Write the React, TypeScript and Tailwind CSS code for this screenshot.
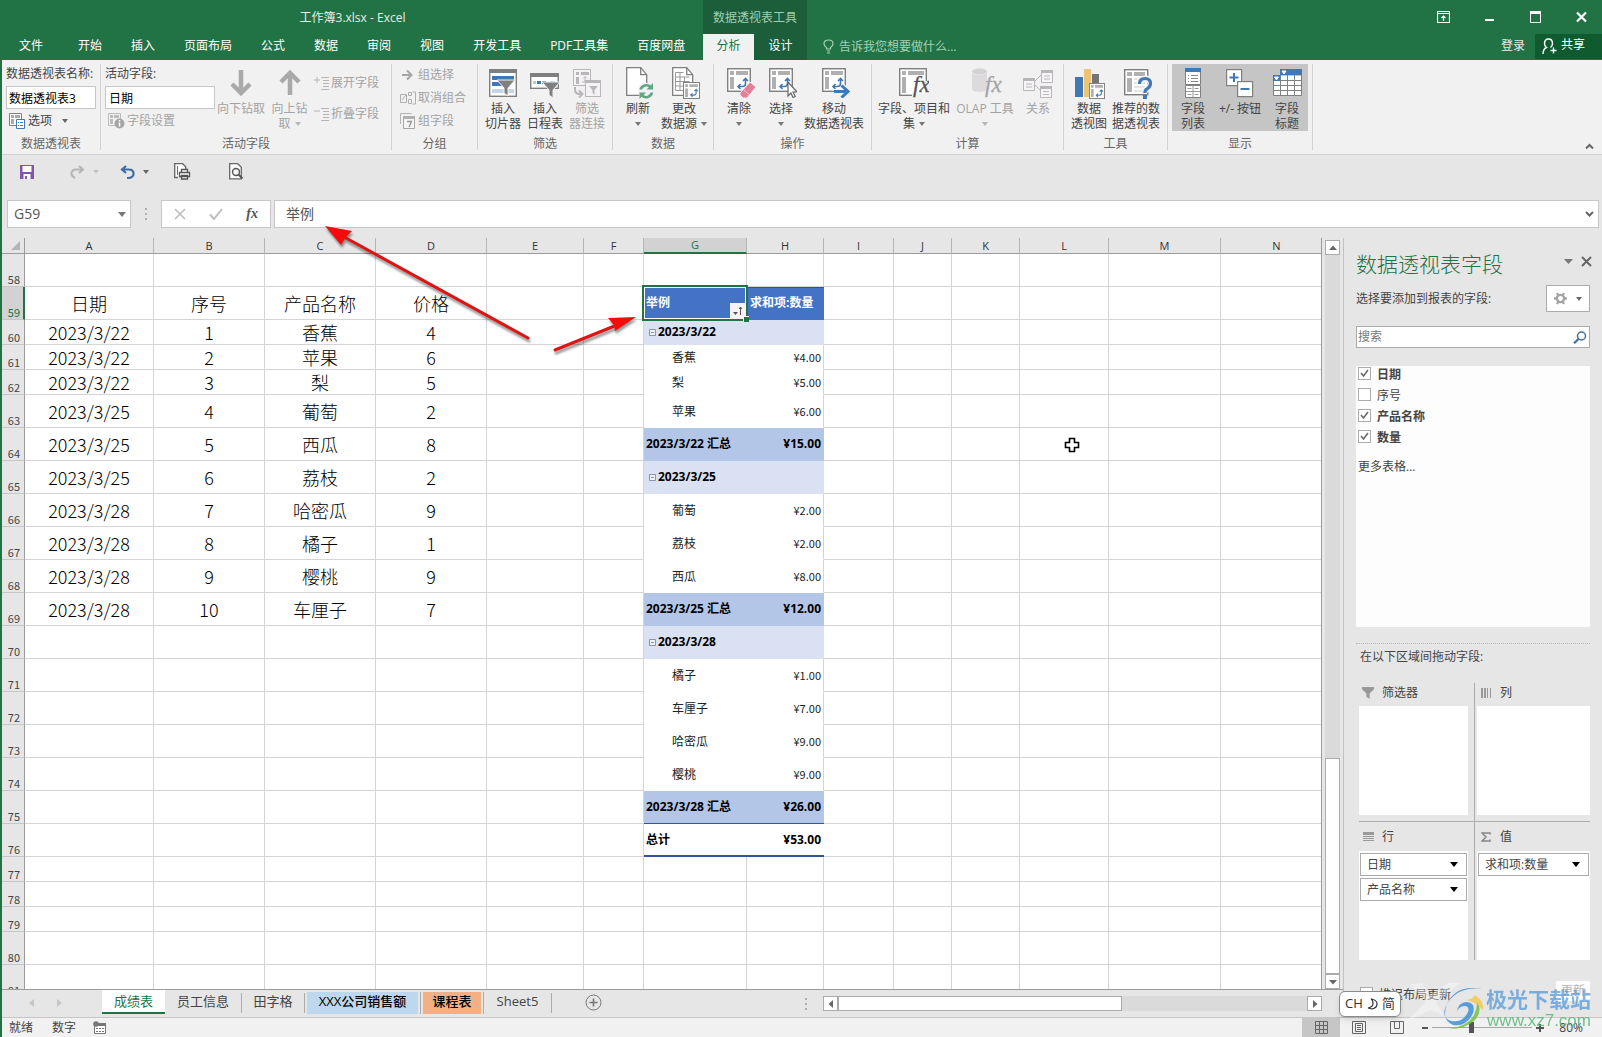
import React, { useState } from 'react';

const GRAY = '#7f7f7f';
const LIGHT = '#b9b6ba';
const BLUE = '#3f78b5';

/* ---------- small shared glyphs ---------- */

const Caret: React.FC<{ className?: string }> = ({ className = 'text-[#666666]' }) => (
  <svg width="6" height="4" viewBox="0 0 6 4" className={`shrink-0 ${className}`}>
    <path d="M0 0h6L3 4z" fill="currentColor" />
  </svg>
);

const PivotBase: React.FC<{ x?: number; y?: number; size?: number; color?: string; arrow?: string }> = ({
  x = 0,
  y = 0,
  size = 24,
  color = GRAY,
  arrow = BLUE,
}) => (
  <svg x={x} y={y} width={size} height={size} viewBox="0 0 24 24">
    <rect x="0.7" y="0.7" width="22.6" height="22.6" fill="#fff" stroke={color} strokeWidth="1.4" />
    <path d="M3 3h4v4H3zM9 3h12v4H9zM3 9h4v12H3z" fill="#b0b0b0" />
    <path d="M11 18.5h4.5c2 0 3-1 3-3V11M13.5 16L11 18.5l2.5 2.5M16 13l2.5-2.5L21 13" fill="none" stroke={arrow} strokeWidth="1.6" />
  </svg>
);

const Fx: React.FC<{ x: number; y: number; color: string }> = ({ x, y, color }) => (
  <text x={x} y={y} fill={color} fontSize="23" fontStyle="italic" fontFamily="Liberation Serif, serif" stroke={color} strokeWidth="0.3">
    fx
  </text>
);

const Funnel: React.FC<{ d: string }> = ({ d }) => <path d={d} fill={GRAY} stroke="#f1f1f1" strokeWidth="1" />;

const icons = {
  slicer: (
    <svg width="28" height="30" viewBox="0 0 28 30">
      <rect x="0.7" y="1.7" width="26.6" height="26.6" fill="#fff" stroke={GRAY} strokeWidth="1.4" />
      <path d="M0 1h28v4H0z" fill={GRAY} />
      <path d="M3 8h22v4H3zM3 14h12v4H3z" fill={BLUE} />
      <path d="M3 21h22v4H3z" fill="#c5d5e6" />
      <Funnel d="M8 12h18l-7 8v8l-4-3v-5z" />
    </svg>
  ),
  timeline: (
    <svg width="30" height="30" viewBox="0 0 30 30">
      <rect x="0.7" y="5.7" width="27.6" height="14.6" fill="#fff" stroke={GRAY} strokeWidth="1.4" />
      <path d="M0 5h29v4H0z" fill={GRAY} />
      <path d="M3 13h3v3H3zM20 13h5v3h-5z" fill="#b9c7d6" />
      <path d="M7 13h4v3H7zM12 13h4v3h-4z" fill={BLUE} />
      <Funnel d="M12 14h18l-7 8v8l-4-3v-5z" />
    </svg>
  ),
  filterConn: (
    <svg width="28" height="30" viewBox="0 0 28 30">
      <rect x="0.5" y="1.5" width="17" height="16" fill="#f5f2f6" stroke={LIGHT} />
      <path d="M3 4h3v3H3zM8 4h8v3H8zM3 9h3v7H3z" fill={LIGHT} />
      <path d="M9 14h3V9M10 10.500l2-2 2 2" fill="none" stroke={LIGHT} />
      <rect x="12.500" y="12.500" width="15" height="16" fill="#f5f2f6" stroke={LIGHT} />
      <path d="M12 12h16v3H12zM16 18h9l-3.500 4v5l-2-2v-3z" fill={LIGHT} />
      <path d="M2 19v3q0 4 5 4h2M6 22.500l3.500 3.500L6 29.500" fill="none" stroke={LIGHT} strokeWidth="2" />
    </svg>
  ),
  refresh: (
    <svg width="32" height="32" viewBox="-4 0 32 32">
      <path d="M.7.7h14l6 7v20.600H.7z" fill="#fff" stroke={GRAY} strokeWidth="1.3" />
      <path d="M14.700.7v7h6" fill="none" stroke={GRAY} strokeWidth="1.3" />
      <circle cx="20" cy="24" r="8" fill="#f1f1f1" />
      <path d="M14.500 22.500a6 6 0 0 1 10-2.500M26 25.500a6 6 0 0 1-10 3" fill="none" stroke="#63a583" strokeWidth="2.600" />
      <path d="M27 16v6.500h-6.500zM13.500 32v-6.500H20z" fill="#63a583" />
    </svg>
  ),
  changeSource: (
    <svg width="32" height="32" viewBox="-4 0 32 32">
      <path d="M.7.7h14l6 7v20.600H.7z" fill="#fff" stroke={GRAY} strokeWidth="1.300" />
      <path d="M14.700.7v7h6" fill="none" stroke={GRAY} strokeWidth="1.300" />
      <path d="M3.500 5.500h8M3.500 10h14M3.500 14.500h14M3.500 19h8M3.500 23.500h8M3.500 5.500v18M8 5.500v18M12.500 10v6" fill="none" stroke="#999" />
      <PivotBase x={11} y={15} size={17} />
    </svg>
  ),
  clear: (
    <svg width="33" height="31" viewBox="-4 0 33 31">
      <PivotBase y={1} />
      <path d="M13 26L23 15l6 5-9 11h-4l-3-3z" fill="#e57f97" stroke="#f1f1f1" />
      <path d="M16.500 22.500l5.500 5" stroke="#f7c9d3" />
    </svg>
  ),
  select: (
    <svg width="32" height="31" viewBox="-4 0 32 31">
      <PivotBase y={1} />
      <path d="M19 15v14l3-3 2 4.500 2.200-1L24 25h4z" fill="#fff" stroke="#666" strokeWidth="1.200" />
    </svg>
  ),
  move: (
    <svg width="32" height="31" viewBox="-4 0 32 31">
      <PivotBase y={1} />
      <path d="M12 24.500h14M20 18.500l6.500 6-6.500 6" fill="none" stroke="#f1f1f1" strokeWidth="5" />
      <path d="M12 24.500h14M19.500 18.500l6.500 6-6.500 6" fill="none" stroke={BLUE} strokeWidth="3" />
    </svg>
  ),
  fields: (
    <svg width="30" height="31" viewBox="0 0 30 31">
      <rect x="0.700" y="1.700" width="26.600" height="26.600" fill="#fff" stroke={GRAY} strokeWidth="1.400" />
      <path d="M3 4h4v4H3zM9 4h16v4H9zM3 10h4v16H3z" fill="#b0b0b0" />
      <path d="M13 28h15V14" fill="none" stroke="#f1f1f1" strokeWidth="3" />
      <Fx x={14} y={25} color="#555" />
    </svg>
  ),
  olap: (
    <svg width="34" height="31" viewBox="-3 0 34 31">
      <path d="M1 4v18c0 4 15 4 15 0V4z" fill="#dcdadd" />
      <ellipse cx="8.500" cy="4.500" rx="7.500" ry="3.200" fill="#d3d1d4" stroke="#e8e6e9" />
      <Fx x={14} y={25} color="#a5a3a6" />
    </svg>
  ),
  relation: (
    <svg width="30" height="30" viewBox="0 0 30 30">
      <path d="M11 14l8-8M11 16l8 8" stroke={LIGHT} />
      <path d="M.5 10.500h11v12H.5zM18.500 2.500h11v12h-11zM17.500 18.500h11v11h-11z" fill="#f7f5f8" stroke={LIGHT} />
      <path d="M0 10h12v3H0zM18 2h12v3H18zM17 18h12v3H17z" fill={LIGHT} />
      <path d="M3 16h6M3 19h6M21 8h6M21 11h6M20 23.500h6M20 26.500h6" stroke={LIGHT} />
    </svg>
  ),
  pivotChart: (
    <svg width="32" height="32" viewBox="-2 0 32 32">
      <path d="M0 10h8v20H0z" fill={BLUE} />
      <path d="M9 2h7v28H9z" fill="#eec373" />
      <path d="M17 7h7v10h-7z" fill="#76767a" />
      <PivotBase x={14} y={16} size={16} />
    </svg>
  ),
  recommended: (
    <svg width="33" height="32" viewBox="-4 0 33 32">
      <rect x="0.700" y="2.700" width="23" height="25" fill="#fff" stroke={GRAY} strokeWidth="1.400" />
      <path d="M3 5h5v4H3zM10 5h11v4H10zM3 11h5v14H3z" fill="#b0b0b0" />
      <path d="M10 12h11M10 16h11M10 20h11M10 24h8" stroke="#c9c9c9" />
      <path d="M15.500 17q0-5.500 5.500-5.500t5.500 5q0 3-3 5t-2.500 4.500" fill="none" stroke="#f1f1f1" strokeWidth="6" />
      <path d="M15.500 17q0-5.500 5.500-5.500t5.500 5q0 3-3 5t-2.500 4.500" fill="none" stroke={BLUE} strokeWidth="3.200" />
      <path d="M19 28h4v4h-4z" fill={BLUE} />
    </svg>
  ),
  fieldList: (
    <svg width="16" height="31" viewBox="0 0 16 31">
      <path d="M.5 1.500h15v16H.5zM.5 18.500h15v12H.5z" fill="#fff" stroke={GRAY} />
      <path d="M0 1h16v4H0z" fill={BLUE} />
      <path d="M3 8.500h1M6 8.500h7M3 11.500h1M6 11.500h7M3 14.500h1M6 14.500h7" stroke="#888" />
      <path d="M8 18v12M1 24.500h14M2.500 21.500h4M9.500 21.500h4M2.500 27.500h4M9.500 27.500h4" stroke="#999" />
    </svg>
  ),
  plusMinus: (
    <svg width="28" height="30" viewBox="0 0 28 30">
      <rect x="0.600" y="1.600" width="15" height="16" fill="#fff" stroke={GRAY} strokeWidth="1.200" />
      <path d="M3.500 9.500h9M8 5v9" stroke={BLUE} strokeWidth="2" />
      <rect x="11.600" y="13.600" width="15" height="15" fill="#fff" stroke={GRAY} strokeWidth="1.200" />
      <path d="M14.500 21h9" stroke={BLUE} strokeWidth="2" />
    </svg>
  ),
  fieldHeaders: (
    <svg width="29" height="29" viewBox="0 0 29 29">
      <path d="M.5 8h28v19.500H.5z" fill="#fff" />
      <path d="M7 1h22v6H7zM0 7h7v6H0z" fill={BLUE} />
      <path d="M.5 13v14.500h28V7M7.500 7v20M14.500 7v20M21.500 7v20M7 12.500h21M1 17.500h27M1 22.500h27" fill="none" stroke={GRAY} />
      <path d="M9 3h4l-2 3zM1.500 9h4l-2 3z" fill="#fff" stroke="#fff" />
    </svg>
  ),
  drillDown: (
    <svg width="22" height="30" viewBox="0 0 22 30">
      <path d="M11 2v24M2 16l9 9 9-9" fill="none" stroke="#a9a9a9" strokeWidth="4.500" />
    </svg>
  ),
  drillUp: (
    <svg width="22" height="30" viewBox="0 0 22 30">
      <path d="M11 27V4M2 14l9-9 9 9" fill="none" stroke="#a9a9a9" strokeWidth="4.500" />
    </svg>
  ),
};

/* ---------- ribbon ---------- */

interface BigButtonProps {
  icon: React.ReactNode;
  lines: string[];
  width: string;
  caret?: 'line' | 'inline';
  disabled?: boolean;
}

const BigButton: React.FC<BigButtonProps> = ({ icon, lines, width, caret, disabled }) => {
  const tone = disabled ? 'text-[#a3a3a3]' : 'text-[#444444]';
  const caretTone = disabled ? 'text-[#b5b5b5]' : 'text-[#777777]';
  return (
    <button disabled={disabled} className={`flex shrink-0 flex-col items-center ${width} ${tone}`}>
      <span className="flex h-[37px] items-center justify-center">{icon}</span>
      {lines.map((line, i) => (
        <span key={line} className="flex h-[15px] items-center gap-1 whitespace-nowrap leading-[15px]">
          {line}
          {caret === 'inline' && i === lines.length - 1 && <Caret className={caretTone} />}
        </span>
      ))}
      {caret === 'line' && (
        <span className="flex h-[15px] items-center">
          <Caret className={caretTone} />
        </span>
      )}
    </button>
  );
};

const Group: React.FC<{ label: string; width: string; children: React.ReactNode }> = ({ label, width, children }) => (
  <section className={`flex shrink-0 flex-col border-r border-[#d2d2d2] ${width}`}>
    <div className="flex h-[68px] px-1">{children}</div>
    <div className="mt-[6px] text-center leading-[14px] text-[#666666]">{label}</div>
  </section>
);

const smallIcons = {
  options: (
    <svg width="17" height="16" viewBox="0 0 17 16">
      <path d="M.5.500h12v12H.5z" fill="#fff" stroke={GRAY} />
      <path d="M2 2h3v3H2zM6 2h5v3H6zM2 6h3v5H2z" fill="#aaa" />
      <path d="M7.500 6.500h8v9h-8z" fill="#fff" stroke={BLUE} />
      <path d="M9 9.500h1M11 9.500h3M9 12.500h1M11 12.500h3" stroke={BLUE} />
    </svg>
  ),
  settings: (
    <svg width="17" height="16" viewBox="0 0 17 16">
      <path d="M.5.500h12v12H.5z" fill="#f3f3f3" stroke="#bbb" />
      <path d="M2 2h3v3H2zM6 2h5v3H6zM2 6h3v5H2z" fill="#bbb" />
      <circle cx="11.500" cy="10.500" r="5" fill="#a5a5a5" />
      <path d="M11.500 7v1.500M11.500 9.500v4" stroke="#fff" strokeWidth="1.500" />
    </svg>
  ),
  expand: (
    <svg width="15" height="15" viewBox="0 0 15 15">
      <path d="M0 4h6M3 1v6M7 1.500h8M9 4.500h6M9 7.500h6M9 10.500h6M7 13.500h8" stroke="#b5b5b5" />
    </svg>
  ),
  collapse: (
    <svg width="15" height="15" viewBox="0 0 15 15">
      <path d="M0 4h6M7 1.500h8M9 4.500h6M9 7.500h6M9 10.500h6M7 13.500h8" stroke="#b5b5b5" />
    </svg>
  ),
  groupSel: (
    <svg width="16" height="14" viewBox="0 0 16 14">
      <path d="M2 7h9M7 2.500L11.500 7 7 11.500" fill="none" stroke="#a5a5a5" strokeWidth="2" />
    </svg>
  ),
  ungroup: (
    <svg width="16" height="14" viewBox="0 0 16 14">
      <path d="M.5 3.500h6v8h-6zM8.500 1.500h3v3h-3zM8.500 8.500h3v4h-3zM12.500 1h3v12h-3M2 9l4-5" fill="none" stroke="#b0b0b0" />
    </svg>
  ),
  groupField: (
    <svg width="16" height="17" viewBox="0 0 16 17">
      <path d="M.5 11V.500h11" fill="none" stroke="#b5b5b5" />
      <path d="M3.500 3.500h11v12h-11z" fill="#f5f5f5" stroke="#a5a5a5" />
      <path d="M3 3h12v3H3z" fill="#b0b0b0" />
      <path d="M7 8.500h4.500L9 14" fill="none" stroke="#999" strokeWidth="1.400" />
    </svg>
  ),
};

const SmallButton: React.FC<{ icon: React.ReactNode; label: string; disabled?: boolean; caret?: boolean }> = ({
  icon,
  label,
  disabled,
  caret,
}) => (
  <button
    disabled={disabled}
    className={`flex h-5 items-center gap-[2px] whitespace-nowrap ${disabled ? 'text-[#a3a3a3]' : 'text-[#444444]'}`}
  >
    {icon}
    {label}
    {caret && <Caret className="ml-[8px] text-[#666666]" />}
  </button>
);

const Ribbon = () => (
  <div className="flex h-[95px] border-b border-[#cfcfcf] bg-[#f1f1f1] pt-1 pb-1">
    <Group label="数据透视表" width="w-[99px]">
      <div className="flex w-full flex-col items-start">
        <label htmlFor="pivot-name" className="h-5 leading-5 whitespace-nowrap text-[#444444]">
          数据透视表名称:
        </label>
        <input
          id="pivot-name"
          defaultValue="数据透视表3"
          className="mt-[2px] h-[23px] w-full border border-[#c6c6c6] bg-white px-[2px] text-black"
        />
        <span className="mt-[2px] pl-[3px]">
          <SmallButton icon={smallIcons.options} label="选项" caret />
        </span>
      </div>
    </Group>
    <Group label="活动字段" width="w-[291px]">
      <div className="flex w-[110px] flex-col items-start">
        <label htmlFor="active-field" className="h-5 leading-5 text-[#444444]">
          活动字段:
        </label>
        <input
          id="active-field"
          defaultValue="日期"
          className="mt-[2px] h-[23px] w-full border border-[#c6c6c6] bg-white px-[3px] text-black"
        />
        <span className="mt-[2px] pl-[3px]">
          <SmallButton icon={smallIcons.settings} label="字段设置" disabled />
        </span>
      </div>
      <BigButton icon={icons.drillDown} lines={['向下钻取']} width="w-[52px]" disabled />
      <BigButton icon={icons.drillUp} lines={['向上钻', '取']} width="w-[45px]" caret="inline" disabled />
      <div className="flex flex-col gap-[11px] pt-[9px] pl-[2px]">
        <SmallButton icon={smallIcons.expand} label="展开字段" disabled />
        <SmallButton icon={smallIcons.collapse} label="折叠字段" disabled />
      </div>
    </Group>
    <Group label="分组" width="w-[86px]">
      <div className="flex flex-col gap-[3px] pt-px pl-1">
        <SmallButton icon={smallIcons.groupSel} label="组选择" disabled />
        <SmallButton icon={smallIcons.ungroup} label="取消组合" disabled />
        <SmallButton icon={smallIcons.groupField} label="组字段" disabled />
      </div>
    </Group>
    <Group label="筛选" width="w-[135px]">
      <BigButton icon={icons.slicer} lines={['插入', '切片器']} width="w-[42px]" />
      <BigButton icon={icons.timeline} lines={['插入', '日程表']} width="w-[42px]" />
      <BigButton icon={icons.filterConn} lines={['筛选', '器连接']} width="w-[42px]" disabled />
    </Group>
    <Group label="数据" width="w-[101px]">
      <BigButton icon={icons.refresh} lines={['刷新']} width="w-[42px]" caret="line" />
      <BigButton icon={icons.changeSource} lines={['更改', '数据源']} width="w-[50px]" caret="inline" />
    </Group>
    <Group label="操作" width="w-[158px]">
      <BigButton icon={icons.clear} lines={['清除']} width="w-[42px]" caret="line" />
      <BigButton icon={icons.select} lines={['选择']} width="w-[42px]" caret="line" />
      <BigButton icon={icons.move} lines={['移动', '数据透视表']} width="w-[64px]" />
    </Group>
    <Group label="计算" width="w-[192px]">
      <BigButton icon={icons.fields} lines={['字段、项目和', '集']} width="w-[76px]" caret="inline" />
      <BigButton icon={icons.olap} lines={['OLAP 工具']} width="w-[66px]" caret="line" disabled />
      <BigButton icon={icons.relation} lines={['关系']} width="w-[40px]" disabled />
    </Group>
    <Group label="工具" width="w-[104px]">
      <BigButton icon={icons.pivotChart} lines={['数据', '透视图']} width="w-[42px]" />
      <BigButton icon={icons.recommended} lines={['推荐的数', '据透视表']} width="w-[52px]" />
    </Group>
    <Group label="显示" width="w-[145px]">
      <div className="flex bg-[#c5c5c5]">
        <BigButton icon={icons.fieldList} lines={['字段', '列表']} width="w-[42px]" />
        <BigButton icon={icons.plusMinus} lines={['+/- 按钮']} width="w-[52px]" />
        <BigButton icon={icons.fieldHeaders} lines={['字段', '标题']} width="w-[42px]" />
      </div>
    </Group>
    <button aria-label="折叠功能区" className="mr-2 ml-auto self-end">
      <svg width="9" height="7" viewBox="0 0 9 7">
        <path d="M1 5.500L4.500 2 8 5.500" fill="none" stroke="#666" strokeWidth="2" />
      </svg>
    </button>
  </div>
);

/* ---------- title bar ---------- */

const menuTabs = ['开始', '插入', '页面布局', '公式', '数据', '审阅', '视图', '开发工具', 'PDF工具集', '百度网盘'];

const TitleBar = () => (
  <header className="bg-[#217346] text-white">
    <div className="flex h-[34px]">
      <div className="w-[701px] shrink-0 text-center leading-[36px] text-[#e3f1e8]">工作簿3.xlsx - Excel</div>
      <div className="w-[104px] shrink-0 bg-[#1b5e39] text-center leading-[36px] text-[#9fcfb3]">数据透视表工具</div>
      <div className="flex flex-1 items-center justify-end gap-[35px] pr-[15px] pb-px">
        <button aria-label="功能区显示选项">
          <svg width="13" height="12" viewBox="0 0 13 12">
            <path d="M.5.500h12v11H.5zM.5 2.500h12M6.500 10V5M4.500 7l2-2 2 2" fill="none" stroke="#fff" strokeWidth="1.200" />
          </svg>
        </button>
        <button aria-label="最小化">
          <svg width="10" height="12" viewBox="0 0 10 12">
            <path d="M0 8h9v2H0z" fill="#fff" />
          </svg>
        </button>
        <button aria-label="最大化">
          <svg width="11" height="12" viewBox="0 0 11 12">
            <path d="M.5.500h10v11H.5z" fill="none" stroke="#fff" />
            <path d="M0 0h11v3H0z" fill="#fff" />
          </svg>
        </button>
        <button aria-label="关闭">
          <svg width="11" height="12" viewBox="0 0 11 12">
            <path d="M1 1.500l9 9M10 1.500l-9 9" stroke="#fff" strokeWidth="2.200" />
          </svg>
        </button>
      </div>
    </div>
    <div className="flex h-[26px] leading-[24px]">
      <nav className="flex w-[701px] shrink-0 gap-[29px] pl-[17px] whitespace-nowrap">
        <button className="mr-[6px] h-[24px]">文件</button>
        {menuTabs.map((t) => (
          <button key={t} className="h-[24px]">
            {t}
          </button>
        ))}
      </nav>
      <nav className="flex w-[104px] shrink-0 bg-[#1b5e39]">
        <button className="w-[51px] bg-[#f1f1f1] pb-[2px] text-[#217346]">分析</button>
        <button className="flex-1 pb-[2px]">设计</button>
      </nav>
      <div className="flex flex-1 items-start pl-4 text-[#a3d1b6]">
        <svg width="12" height="15" viewBox="0 0 12 15" className="mt-[5px] shrink-0">
          <path d="M3.500 10V8.500Q1 7 1 4.800 1 1 5.500 1T10 4.800Q10 7 7.500 8.500V10zM4 12h3M4 14h3" fill="none" stroke="currentColor" strokeWidth="1.200" />
        </svg>
        <input
          aria-label="告诉我您想要做什么"
          placeholder="告诉我您想要做什么..."
          className="ml-1 h-[25px] w-[140px] bg-transparent outline-none placeholder:text-[#a3d1b6]"
        />
        <button className="mr-[10px] ml-auto h-[24px] text-[#e3f1e8]">登录</button>
        <button className="flex h-[25px] w-[67px] items-start gap-1 bg-[#0f5a2e] pl-[7px] leading-[22px] text-white">
          <svg width="15" height="17" viewBox="0 0 15 17" className="mt-1">
            <path d="M1 16q0-5 3.500-6.500Q2.500 8 2.500 5.500 2.500 1 6.500 1t4 4.500Q10.500 8 8.500 9.500M11.500 9.500v6M8.500 12.500h6" fill="none" stroke="#fff" strokeWidth="1.400" />
          </svg>
          共享
        </button>
      </div>
    </div>
  </header>
);

/* ---------- quick access and formula bar ---------- */

const QuickAccess = () => (
  <div className="flex h-[33px] items-center pl-[18px]">
    <button aria-label="保存">
      <svg width="14" height="14" viewBox="0 0 14 14">
        <path d="M0 0h14v14H0z" fill="#8057a8" />
        <path d="M2.500 1h9v6h-9zM3.500 9h7v5h-7z" fill="#fff" />
        <path d="M5 11h2v3H5z" fill="#8057a8" />
      </svg>
    </button>
    <button aria-label="恢复" className="ml-9 flex items-center gap-2">
      <svg width="15" height="14" viewBox="0 0 15 14">
        <path d="M5 13Q1 11 1.500 8 2 4.500 6 4.500h6.500M9 1l4 3.500L9 8" fill="none" stroke="#b5b5b5" strokeWidth="2" />
      </svg>
      <Caret className="text-[#c2c2c2]" />
    </button>
    <button aria-label="撤消" className="ml-[21px] flex items-center gap-2">
      <svg width="15" height="14" viewBox="0 0 15 14">
        <path d="M7 13h2Q14 12 13.500 8 13 4.500 9 4.500H2M6 1L2 4.500 6 8" fill="none" stroke="#3d6da8" strokeWidth="2.200" />
      </svg>
      <Caret />
    </button>
    <button aria-label="打印" className="ml-[25px]">
      <svg width="17" height="17" viewBox="0 0 17 17">
        <path d="M4 14.500H.7V.7h8l3 3V6" fill="#fff" stroke="#666" strokeWidth="1.300" />
        <path d="M3.500 3v9" stroke={BLUE} />
        <path d="M5.500 9.500h10v4h-10zM7.500 6.500h6v3h-6zM7.500 12.500h6v3.500h-6z" fill="#fff" stroke="#555" strokeWidth="1.300" />
      </svg>
    </button>
    <button aria-label="打印预览" className="ml-[38px]">
      <svg width="15" height="17" viewBox="0 0 15 17">
        <path d="M.7.700h8l3.600 3.600v11.500H.7z" fill="#fff" stroke="#666" strokeWidth="1.300" />
        <circle cx="7" cy="9" r="3.500" fill="#f5f5f5" stroke="#555" strokeWidth="1.400" />
        <path d="M9.500 11.500l4 4" stroke="#555" strokeWidth="2" />
      </svg>
    </button>
  </div>
);

const Dots = () => (
  <svg width="2" height="12" viewBox="0 0 2 12" className="shrink-0">
    <path d="M0 0h2v2H0zM0 5h2v2H0zM0 10h2v2H0z" fill="#b0b0b0" />
  </svg>
);

const FormulaBar = () => (
  <div className="mt-[12px] mb-[10px] flex h-[28px] items-stretch pr-[3px] pl-[5px] text-sm text-[#555555]">
    <div className="flex w-[124px] shrink-0 items-center border border-[#c6c6c6] bg-white pr-1">
      <input aria-label="名称框" defaultValue="G59" className="w-full min-w-0 flex-1 bg-transparent pl-[6px] outline-none" />
      <svg width="8" height="5" viewBox="0 0 8 5">
        <path d="M0 0h8L4 5z" fill="#777" />
      </svg>
    </div>
    <div className="flex w-[30px] shrink-0 items-center justify-center">
      <Dots />
    </div>
    <div className="flex w-[110px] shrink-0 items-center justify-between border border-[#c6c6c6] bg-white px-3">
      <button aria-label="取消">
        <svg width="12" height="12" viewBox="0 0 12 12">
          <path d="M1 1l10 10M11 1L1 11" stroke="#bdbdbd" strokeWidth="1.600" />
        </svg>
      </button>
      <button aria-label="输入">
        <svg width="14" height="12" viewBox="0 0 14 12">
          <path d="M1 6.500L5 11 13 1" fill="none" stroke="#bdbdbd" strokeWidth="2" />
        </svg>
      </button>
      <button aria-label="插入函数" className="font-['Liberation_Serif',serif] text-sm font-bold italic">
        fx
      </button>
    </div>
    <div className="ml-[3px] flex flex-1 items-center border border-[#c6c6c6] bg-white pr-1">
      <input aria-label="编辑栏" defaultValue="举例" className="flex-1 bg-transparent pl-[11px] outline-none" />
      <svg width="9" height="6" viewBox="0 0 9 6">
        <path d="M1 1l3.500 3.500L8 1" fill="none" stroke="#666" strokeWidth="2" />
      </svg>
    </div>
  </div>
);

/* ---------- worksheet ---------- */

const columns = [
  { id: 'A', w: 'w-[129px]' },
  { id: 'B', w: 'w-[111px]' },
  { id: 'C', w: 'w-[111px]' },
  { id: 'D', w: 'w-[111px]' },
  { id: 'E', w: 'w-[97px]' },
  { id: 'F', w: 'w-[60px]' },
  { id: 'G', w: 'w-[103px]' },
  { id: 'H', w: 'w-[77px]' },
  { id: 'I', w: 'w-[70px]' },
  { id: 'J', w: 'w-[58px]' },
  { id: 'K', w: 'w-[68px]' },
  { id: 'L', w: 'w-[89px]' },
  { id: 'M', w: 'w-[112px]' },
  { id: 'N', w: '' },
];

type PivotKind = 'head' | 'group' | 'item' | 'subtotal' | 'lastSubtotal' | 'total';

interface SheetRow {
  n: number;
  data?: string[];
  pivot?: [PivotKind, string, string];
}

const rows: SheetRow[] = [
  { n: 58 },
  { n: 59, data: ['日期', '序号', '产品名称', '价格'], pivot: ['head', '举例', '求和项:数量'] },
  { n: 60, data: ['2023/3/22', '1', '香蕉', '4'], pivot: ['group', '2023/3/22', ''] },
  { n: 61, data: ['2023/3/22', '2', '苹果', '6'], pivot: ['item', '香蕉', '¥4.00'] },
  { n: 62, data: ['2023/3/22', '3', '梨', '5'], pivot: ['item', '梨', '¥5.00'] },
  { n: 63, data: ['2023/3/25', '4', '葡萄', '2'], pivot: ['item', '苹果', '¥6.00'] },
  { n: 64, data: ['2023/3/25', '5', '西瓜', '8'], pivot: ['subtotal', '2023/3/22 汇总', '¥15.00'] },
  { n: 65, data: ['2023/3/25', '6', '荔枝', '2'], pivot: ['group', '2023/3/25', ''] },
  { n: 66, data: ['2023/3/28', '7', '哈密瓜', '9'], pivot: ['item', '葡萄', '¥2.00'] },
  { n: 67, data: ['2023/3/28', '8', '橘子', '1'], pivot: ['item', '荔枝', '¥2.00'] },
  { n: 68, data: ['2023/3/28', '9', '樱桃', '9'], pivot: ['item', '西瓜', '¥8.00'] },
  { n: 69, data: ['2023/3/28', '10', '车厘子', '7'], pivot: ['subtotal', '2023/3/25 汇总', '¥12.00'] },
  { n: 70, pivot: ['group', '2023/3/28', ''] },
  { n: 71, pivot: ['item', '橘子', '¥1.00'] },
  { n: 72, pivot: ['item', '车厘子', '¥7.00'] },
  { n: 73, pivot: ['item', '哈密瓜', '¥9.00'] },
  { n: 74, pivot: ['item', '樱桃', '¥9.00'] },
  { n: 75, pivot: ['lastSubtotal', '2023/3/28 汇总', '¥26.00'] },
  { n: 76, pivot: ['total', '总计', '¥53.00'] },
  { n: 77 },
  { n: 78 },
  { n: 79 },
  { n: 80 },
  { n: 81 },
];

const shortRows = [60, 61, 62, 77, 78, 79];

const pivotStyle: Record<PivotKind, string> = {
  head: "bg-[#4472c4] text-white font-bold border-b border-b-[#4472c4] shadow-[inset_0_1px_0_#2f5597] font-['Open_Sans','Noto_Sans_CJK_SC',sans-serif]",
  group: "bg-[#d9e1f2] font-bold border-b border-b-[#d9e1f2] font-['Open_Sans','Noto_Sans_CJK_SC',sans-serif]",
  item: "bg-white border-b border-b-white font-['Noto_Sans_CJK_SC',sans-serif] text-[#222222]",
  subtotal: "bg-[#b4c6e7] font-bold border-b border-b-[#b4c6e7] font-['Open_Sans','Noto_Sans_CJK_SC',sans-serif]",
  lastSubtotal: "bg-[#b4c6e7] font-bold border-b border-b-[#305496] font-['Open_Sans','Noto_Sans_CJK_SC',sans-serif]",
  total: "bg-white font-bold border-b-2 border-b-[#305496] font-['Open_Sans','Noto_Sans_CJK_SC',sans-serif]",
};

const PivotCells: React.FC<{ row: SheetRow }> = ({ row }) => {
  const [kind, name, value] = row.pivot!;
  const base = `p-0 leading-4 whitespace-nowrap ${pivotStyle[kind]}`;
  return (
    <>
      <td className={`relative text-xs ${base}`}>
        <div className={`flex items-center ${kind === 'item' ? 'pl-[28px]' : kind === 'group' ? 'pl-[5px]' : 'pl-[2px]'}`}>
          {kind === 'group' && (
            <svg width="7" height="7" viewBox="0 0 7 7" className="mr-[2px]">
              <path d="M.5.500h6v6h-6zM2 3.500h3" fill="#eef2fa" stroke="#8c93a3" />
            </svg>
          )}
          {name}
        </div>
        {kind === 'head' && (
          <div className="absolute -top-[2px] -right-px bottom-[-2px] -left-[2px] z-10 border-2 border-[#217346] ring-1 ring-white ring-inset">
            <button aria-label="筛选 举例" className="absolute right-0 bottom-0 flex h-4 w-4 items-center justify-center bg-[#f4f4f4]">
              <svg width="12" height="10" viewBox="0 0 12 10">
                <path d="M1 6h5L3.500 9z" fill="#555" />
                <path d="M8.500 9V1M7 3l1.500-2L10 3" fill="none" stroke="#555" />
              </svg>
            </button>
            <span className="absolute -right-[3px] -bottom-[3px] h-[6px] w-[6px] border-t border-l border-white bg-[#217346]" />
          </div>
        )}
      </td>
      <td
        className={`${base} ${
          kind === 'head'
            ? 'pl-[3px] text-left text-xs'
            : kind === 'item'
              ? 'border-r border-r-[#d4d4d4] pr-[2px] text-right text-[11px]'
              : 'pr-[3px] text-right text-xs'
        }`}
      >
        {value}
      </td>
    </>
  );
};

const Sheet = () => (
  <div className="min-h-0 flex-1 overflow-hidden border-r border-[#9b9b9b]">
    <table className="w-[calc(100%+12px)] table-fixed border-separate border-spacing-0 font-['Noto_Sans_CJK_SC',sans-serif] text-black">
      <colgroup>
        <col className="w-[23px]" />
        {columns.map((c) => (
          <col key={c.id} className={c.w} />
        ))}
      </colgroup>
      <thead className="font-['Open_Sans',sans-serif]">
        <tr className="h-[16px] text-[11px] leading-[14px]">
          <th aria-label="全选" className="border-r border-b border-[#9b9b9b] p-0">
            <svg width="9" height="9" viewBox="0 0 9 9" className="ml-auto mr-1">
              <path d="M9 0v9H0z" fill="#b5b5b5" />
            </svg>
          </th>
          {columns.map((c) => (
            <th
              key={c.id}
              scope="col"
              className={
                c.id === 'G'
                  ? 'border-r border-b-2 border-r-[#b5b5b5] border-b-[#217346] bg-[#d2d2d2] p-0 font-normal text-[#217346]'
                  : 'border-r border-b border-r-[#b5b5b5] border-b-[#9b9b9b] p-0 font-normal text-[#333333]'
              }
            >
              {c.id}
            </th>
          ))}
        </tr>
      </thead>
      <tbody>
        {rows.map((row) => (
          <tr key={row.n} className={shortRows.includes(row.n) ? 'h-[25px]' : 'h-[33px]'}>
            <th
              scope="row"
              className={
                row.n === 59
                  ? 'border-r-2 border-b border-r-[#217346] border-b-[#c6c6c6] bg-[#d2d2d2] p-0 pr-[3px] text-right align-bottom text-[11px] leading-[14px] font-normal text-[#217346]'
                  : 'border-r border-b border-r-[#9b9b9b] border-b-[#c6c6c6] bg-[#e6e6e6] p-0 pr-1 text-right align-bottom text-[11px] leading-[14px] font-normal text-[#444444]'
              }
            >
              {row.n}
            </th>
            {columns.map((c, i) => {
              if (row.pivot && c.id === 'G') return <PivotCells key={c.id} row={row} />;
              if (row.pivot && c.id === 'H') return null;
              return (
                <td
                  key={c.id}
                  className="border-r border-b border-[#d4d4d4] bg-white p-0 text-center text-[18px] leading-[22px] font-light whitespace-nowrap"
                >
                  {row.data && row.data[i]}
                </td>
              );
            })}
          </tr>
        ))}
      </tbody>
    </table>
  </div>
);

const ScrollButton: React.FC<{ label: string; d: string; className: string }> = ({ label, d, className }) => (
  <button aria-label={label} className={`flex shrink-0 items-center justify-center border border-[#ababab] bg-white ${className}`}>
    <svg width="8" height="8" viewBox="0 0 8 8">
      <path d={d} fill="#666" />
    </svg>
  </button>
);

const SheetTabs = () => {
  const plain = 'mt-[3px] h-[20px] border-r border-[#ababab] pb-1 leading-4';
  const tinted = 'mt-[2px] flex h-[22px] border-r border-[#ababab] px-[2px]';
  return (
    <div className="flex h-[28px] shrink-0 items-start border-t border-[#9b9b9b] pr-[21px] text-[13px] leading-[22px] text-[#444444]">
      <div className="flex h-[25px] w-[100px] shrink-0 items-center gap-[23px] pl-[27px]">
        <svg width="5" height="8" viewBox="0 0 5 8">
          <path d="M5 0v8L0 4z" fill="#c6c6c6" />
        </svg>
        <svg width="5" height="8" viewBox="0 0 5 8">
          <path d="M0 0v8l5-4z" fill="#c6c6c6" />
        </svg>
      </div>
      <button className="h-[24px] w-[63px] border-b-2 border-[#217346] bg-white leading-[20px] text-[#217346]">成绩表</button>
      <button className={`w-[77px] ${plain}`}>员工信息</button>
      <button className={`w-[63px] ${plain}`}>田字格</button>
      <div className={`w-[116px] ${tinted}`}>
        <button className="w-full bg-[#bdd7ee] pb-1 leading-[18px] font-medium text-black">XXX公司销售额</button>
      </div>
      <div className={`w-[63px] ${tinted}`}>
        <button className="w-full bg-[#f4b084] pb-1 leading-[18px] font-medium text-black">课程表</button>
      </div>
      <button className={`w-[68px] ${plain}`}>Sheet5</button>
      <button aria-label="新工作表" className="mt-1 ml-[33px]">
        <svg width="17" height="17" viewBox="0 0 17 17">
          <circle cx="8.500" cy="8.500" r="7.500" fill="none" stroke="#777" />
          <path d="M8.500 4.500v8M4.500 8.500h8" stroke="#777" strokeWidth="1.600" />
        </svg>
      </button>
      <div className="ml-auto flex h-[27px] items-center">
        <Dots />
        <ScrollButton label="向左滚动" d="M6 0v8L1.500 4z" className="ml-4 h-[15px] w-[15px]" />
        <div className="h-[15px] w-[469px] bg-[#dadada]">
          <div className="h-full w-[284px] border border-[#ababab] bg-white" />
        </div>
        <ScrollButton label="向右滚动" d="M2 0v8l4.500-4z" className="h-[15px] w-[15px]" />
      </div>
    </div>
  );
};

/* ---------- field pane ---------- */

const CheckRow: React.FC<{ label: string; initial?: boolean }> = ({ label, initial = false }) => {
  const [on, setOn] = useState(initial);
  return (
    <label className={`relative flex h-[21px] items-start gap-[6px] leading-[17px] ${on ? 'font-bold' : ''}`}>
      <input
        type="checkbox"
        checked={on}
        onChange={(e) => setOn(e.target.checked)}
        className="mt-px h-[13px] w-[13px] shrink-0 appearance-none border border-[#ababab] bg-white"
      />
      {on && (
        <svg width="9" height="8" viewBox="0 0 9 8" className="pointer-events-none absolute top-[3px] left-[2px]">
          <path d="M1 4l2.500 3L8 1" fill="none" stroke="#666" strokeWidth="1.500" />
        </svg>
      )}
      {label}
    </label>
  );
};

const AreaSelect: React.FC<{ value: string }> = ({ value }) => (
  <div className="relative mx-px flex items-center">
    <select
      aria-label={value}
      defaultValue={value}
      className="h-[23px] w-full appearance-none border border-[#ababab] bg-white pl-[6px] text-[#444444]"
    >
      <option>{value}</option>
    </select>
    <svg width="8" height="5" viewBox="0 0 8 5" className="pointer-events-none absolute right-[9px]">
      <path d="M0 0h8L4 5z" fill="#000" />
    </svg>
  </div>
);

interface AreaProps {
  icon: React.ReactNode;
  title: string;
  head: string;
  pad: string;
  fields?: string[];
}

const Area: React.FC<AreaProps> = ({ icon, title, head, pad, fields = [] }) => (
  <div className={pad}>
    <div className={`flex items-center gap-[8px] pl-[3px] ${head}`}>
      <span className="flex w-3 justify-center">{icon}</span>
      {title}
    </div>
    <div className="flex h-[109px] flex-col gap-[2px] bg-white pt-[2px]">
      {fields.map((f) => (
        <AreaSelect key={f} value={f} />
      ))}
    </div>
  </div>
);

const FieldPane = () => (
  <aside className="flex w-[259px] shrink-0 flex-col border-l border-[#c0c0c0] pr-3 pl-3 text-[#444444]">
    <div className="mt-[10px] flex h-8 items-center">
      <h2 className="text-[21px] leading-8 font-light text-[#217346]">数据透视表字段</h2>
      <div className="mr-[-2px] mb-[6px] ml-auto flex items-center gap-2">
        <svg width="9" height="5" viewBox="0 0 9 5">
          <path d="M0 0h9L4.500 5z" fill="#777" />
        </svg>
        <button aria-label="关闭窗格">
          <svg width="11" height="11" viewBox="0 0 11 11">
            <path d="M1 1l9 9M10 1l-9 9" stroke="#666" strokeWidth="2" />
          </svg>
        </button>
      </div>
    </div>
    <div className="mt-[5px] flex h-[27px] items-center justify-between">
      <span>选择要添加到报表的字段:</span>
      <button aria-label="工具" className="flex h-[27px] w-[44px] items-center justify-center gap-[9px] border border-[#ababab] bg-white">
        <svg width="13" height="13" viewBox="0 0 13 13">
          <circle cx="6.500" cy="6.500" r="3.600" fill="none" stroke="#a5a5a5" strokeWidth="2.400" />
          <path d="M3 1l1.500 2.500M10 1L8.500 3.500M3 12l1.500-2.500M10 12L8.500 9.500M0 6.500h3M10 6.500h3" stroke="#a5a5a5" strokeWidth="2.400" />
        </svg>
        <Caret />
      </button>
    </div>
    <div className="mt-[14px] flex h-[22px] shrink-0 items-center border border-[#ababab] bg-white pr-[2px]">
      <input aria-label="搜索" placeholder="搜索" className="min-w-0 flex-1 bg-transparent pl-px outline-none placeholder:text-[#777777]" />
      <svg width="14" height="13" viewBox="0 0 14 13">
        <circle cx="8.500" cy="5" r="4" fill="none" stroke="#3f6fa3" strokeWidth="1.500" />
        <path d="M5.500 8L1 12.300" stroke="#3f6fa3" strokeWidth="2.200" />
      </svg>
    </div>
    <div className="mt-[18px] flex-1 bg-[#fdfdfd] pl-[2px]">
      <CheckRow label="日期" initial />
      <CheckRow label="序号" />
      <CheckRow label="产品名称" initial />
      <CheckRow label="数量" initial />
      <a href="#more" className="mt-2 block leading-[18px]">
        更多表格...
      </a>
    </div>
    <div className="mt-4 border-t border-dotted border-[#b5b5b5]" />
    <div className="mt-[3px] h-5 pl-1 leading-5">在以下区域间拖动字段:</div>
    <div className="mt-4 ml-[3px] grid shrink-0 grid-cols-[116px_1fr]">
      <Area
        pad="border-r border-[#ababab] pr-[6px] pb-[6px]"
        head="h-[23px] pb-1"
        title="筛选器"
        icon={
          <svg width="12" height="12" viewBox="0 0 11 11">
            <path d="M0 0h11v2L7 6v5L4 9V6L0 2z" fill="#999" />
          </svg>
        }
      />
      <Area
        pad="pl-[2px]"
        head="h-[23px] pb-1"
        title="列"
        icon={
          <svg width="10" height="10" viewBox="0 0 10 10">
            <path d="M0 0h2v10H0zM3 0h2v10H3zM6 0h1v10H6zM9 0h1v10H9z" fill="#999" />
          </svg>
        }
      />
      <div className="col-span-2 h-px bg-[#ababab]" />
      <Area
        pad="border-r border-[#ababab] pr-[6px]"
        head="h-[29px]"
        title="行"
        fields={['日期', '产品名称']}
        icon={
          <svg width="11" height="9" viewBox="0 0 11 9">
            <path d="M0 0h11v3H0zM0 4h11v1H0zM0 6h11v1H0zM0 8h11v1H0z" fill="#999" />
          </svg>
        }
      />
      <Area
        pad="pl-[2px]"
        head="h-[29px]"
        title="值"
        fields={['求和项:数量']}
        icon={
          <svg width="10" height="10" viewBox="0 0 10 10">
            <path d="M9 2.500V1H1l4 4-4 4h8V7.500" fill="none" stroke="#888" strokeWidth="1.500" />
          </svg>
        }
      />
    </div>
    <div className="mt-[21px] mb-4 flex h-5 shrink-0 items-center justify-between pl-1">
      <div className="pt-[10px]">
        <CheckRow label="推迟布局更新" />
      </div>
      <button disabled className="h-5 w-[34px] bg-[#fdfdfd] text-[#b5b5b5]">
        更新
      </button>
    </div>
  </aside>
);

/* ---------- status bar ---------- */

const StatusBar = () => (
  <footer className="flex h-[20px] shrink-0 items-center border-t border-[#c6c6c6] bg-[#f1f1f1] pr-[19px] pl-[7px] text-[#444444]">
    <span>就绪</span>
    <span className="ml-[19px]">数字</span>
    <svg width="13" height="13" viewBox="0 0 13 13" className="ml-[17px]">
      <path d="M1.500 4.500h11v8h-11z" fill="#fff" stroke="#777" />
      <path d="M5 2h8v3H5z" fill="#777" />
      <circle cx="3" cy="3" r="2.800" fill="#777" />
      <path d="M3 7.500h2M6 7.500h2M9 7.500h2M3 10.500h2M6 10.500h2M9 10.500h2" stroke="#777" />
    </svg>
    <div className="ml-auto flex h-full items-center">
      <button aria-label="普通" className="flex h-full w-[38px] items-center justify-center bg-[#c6c6c6]">
        <svg width="13" height="13" viewBox="0 0 13 13">
          <path d="M.5.500h12v12H.5zM4.500 0v13M8.500 0v13M0 4.500h13M0 8.500h13" fill="none" stroke="#666" />
        </svg>
      </button>
      <button aria-label="页面布局" className="flex h-full w-[38px] items-center justify-center">
        <svg width="14" height="13" viewBox="0 0 14 13">
          <path d="M.5.500h13v12H.5zM3.500 2.500h7v8h-7zM5 4.500h4M5 6.500h4M5 8.500h4" fill="none" stroke="#666" />
        </svg>
      </button>
      <button aria-label="分页预览" className="flex h-full w-[38px] items-center justify-center">
        <svg width="14" height="13" viewBox="0 0 14 13">
          <path d="M.5.500h13v12H.5zM4.500 0v7.500h5V0" fill="none" stroke="#666" />
        </svg>
      </button>
      <button aria-label="缩小" className="ml-[6px] h-[2px] w-[6px] bg-[#555555]" />
      <div className="relative ml-1 flex h-full items-center">
        <input
          type="range"
          aria-label="缩放"
          min={10}
          max={400}
          defaultValue={160}
          className="h-px w-[100px] appearance-none bg-[#a5a5a5] [&::-webkit-slider-thumb]:h-[11px] [&::-webkit-slider-thumb]:w-[5px] [&::-webkit-slider-thumb]:appearance-none [&::-webkit-slider-thumb]:bg-[#555555]"
        />
      </div>
      <button aria-label="放大" className="ml-1">
        <svg width="8" height="8" viewBox="0 0 8 8">
          <path d="M4 0v8M0 4h8" stroke="#555" strokeWidth="2" />
        </svg>
      </button>
      <span className="ml-[15px]">80%</span>
    </div>
  </footer>
);

/* ---------- things floating over the window ---------- */

const Annotations = () => (
  <svg width="330" height="140" viewBox="0 0 330 140" className="pointer-events-none absolute top-[220px] left-[314px] z-20 drop-shadow-[1px_3px_1px_rgba(0,0,0,0.4)]">
    <path d="M30 18l182 100" stroke="#e01212" strokeWidth="3" strokeLinecap="round" />
    <path d="M9 6l27 5-6 6-5 8z" fill="#f40b0b" />
    <path d="M239 130l62-25" stroke="#e01212" strokeWidth="3" strokeLinecap="round" />
    <path d="M320 97l-21 14-1-6-6-7z" fill="#f40b0b" />
  </svg>
);

const CellCursor = () => (
  <svg width="16" height="16" viewBox="0 0 16 16" className="pointer-events-none absolute top-[437px] left-[1062px] z-20">
    <path d="M5.500 1.500h5v4h4v5h-4v4h-5v-4h-4v-5h4z" fill="#fff" stroke="#000" strokeWidth="1.600" />
  </svg>
);

const ImeBadge = () => (
  <div className="absolute bottom-[20px] left-[1337px] z-20 flex h-[26px] w-[62px] items-center justify-center gap-1 rounded-md border border-[#8a8a8a] bg-white text-[13px] text-[#333333] shadow-md">
    CH
    <svg width="11" height="12" viewBox="0 0 11 12">
      <path d="M4 1q6 1 6 5t-5 5l-4-1q5-1 5-4.500T4 1z" fill="none" stroke="#333" strokeWidth="1.200" />
    </svg>
    简
  </div>
);

const Watermark = () => (
  <div className="pointer-events-none absolute right-[11px] bottom-[7px] z-20 flex items-end">
    <svg width="82" height="48" viewBox="0 0 82 48">
      <path d="M6 2l12-1 8 12L44 1h12L32 20l8 14-13-6L2 40l20-20z" fill="#fff" opacity="0.350" />
      <path d="M78 7Q54 4 43 22q-7 13 4 17 12 2 17-9 2-6-4-6-6 1-7 6 1-10 10-10 9 1 6 11-6 14-20 12-12-5-6-21Q52 2 78 7z" fill="#3f8ed8" opacity="0.850" />
      <path d="M73 20q6 8-2 18-9 9-26 9 19-3 25-14 3-6 3-13z" fill="#72c043" opacity="0.850" />
      <path d="M71 13q10 7 8 15-7-8-16-10 6-1 8-5z" fill="#f2c230" opacity="0.700" />
    </svg>
    <div className="flex flex-col items-end">
      <span className="text-[21px] leading-[26px] font-bold whitespace-nowrap text-[#4f95d8] opacity-70">极光下载站</span>
      <span className="font-['Liberation_Sans',sans-serif] text-[17px] leading-[18px] text-[#5cb779] opacity-85">www.xz7.com</span>
    </div>
  </div>
);

const App = () => (
  <div className="relative flex h-screen flex-col overflow-hidden border-l-2 border-[#217346] bg-[#e6e6e6] font-['Open_Sans','Noto_Sans_CJK_SC',sans-serif] text-xs">
    <TitleBar />
    <Ribbon />
    <QuickAccess />
    <FormulaBar />
    <main className="flex min-h-0 flex-1">
      <div className="flex min-w-0 flex-1 flex-col">
        <div className="flex min-h-0 flex-1">
          <Sheet />
          <div className="flex w-[21px] shrink-0 flex-col items-center pt-[2px]">
            <ScrollButton label="向上滚动" d="M0 6h8L4 1.500z" className="h-[15px] w-[15px]" />
            <div className="flex w-[15px] flex-1 flex-col justify-end bg-[#dadada]">
              <div className="h-[216px] border border-[#ababab] bg-white" />
            </div>
            <ScrollButton label="向下滚动" d="M0 2h8L4 6.500z" className="h-[15px] w-[15px]" />
          </div>
        </div>
        <SheetTabs />
      </div>
      <FieldPane />
    </main>
    <StatusBar />
    <Annotations />
    <CellCursor />
    <ImeBadge />
    <Watermark />
  </div>
);

export default App;
